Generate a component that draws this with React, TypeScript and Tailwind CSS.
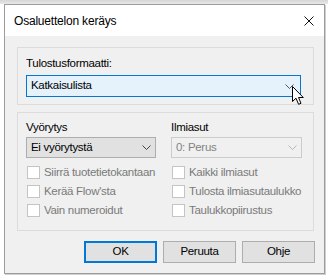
import React from "react";

const font = { fontFamily: '"Liberation Sans", Arial, sans-serif' };

function Chevron({ color = "#333" }: { color?: string }) {
  return (
    <svg width="9" height="5" viewBox="0 0 9 5" className="shrink-0">
      <path d="M0.5 0.5 L4.5 4.5 L8.5 0.5" fill="none" stroke={color} strokeWidth="1" />
    </svg>
  );
}

function Check({ label }: { label: string }) {
  return (
    <div className="flex items-center h-[19px]">
      <div className="w-[13px] h-[13px] border border-[#c4c4c4] bg-white ml-[1px]" />
      <span className="ml-[4px] text-[#7a7a7a]">{label}</span>
    </div>
  );
}

export default function App() {
  return (
    <div
      className="w-[328px] h-[279px] bg-white overflow-hidden text-[11.5px] tracking-[-0.3px] text-black leading-none"
      style={font}
    >
      <div className="h-[4px] bg-gradient-to-b from-[#d6d6d6] to-[#e8e8e8]" />
      <div className="ml-[4px] w-[321px] h-[270px] border border-[#9c9c9c] flex flex-col shadow-[1px_1px_0_#cfcfcf]">
        {/* title bar */}
        <div className="h-[31px] bg-white flex items-center justify-between pl-[9px] pr-[10px]">
          <span className="text-[12px] tracking-[-0.2px]">Osaluettelon keräys</span>
          <svg width="10" height="10" viewBox="0 0 10 10">
            <path d="M0.5 0.5 L9.5 9.5 M9.5 0.5 L0.5 9.5" stroke="#111" strokeWidth="1" />
          </svg>
        </div>

        <div className="flex-1 bg-[#f0f0f0] pt-[11px] pl-[12px]">
          {/* group 1 */}
          <div className="w-[297px] h-[58px] border border-[#dcdcdc] pl-[8px] pt-[10px]">
            <div className="h-[12px]">Tulostusformaatti:</div>
            <div className="relative mt-[5px] w-[275px] h-[22px] border border-[#0078d7] bg-[#e5f1fb] flex items-center pl-[4px] pr-[6px] justify-between">
              <span>Katkaisulista</span>
              <Chevron color="#555" />
              <svg className="absolute left-[265px] top-[10px]" width="13" height="20" viewBox="0 0 13 20">
                <path
                  d="M0.5 0.5 L0.5 15.5 L4 12.2 L6.6 18.3 L9 17.3 L6.5 11.5 L11.3 11.5 Z"
                  fill="#fff"
                  stroke="#000"
                  strokeWidth="1"
                  strokeLinejoin="miter"
                />
              </svg>
            </div>
          </div>

          {/* group 2 */}
          <div className="mt-[7px] w-[297px] h-[119px] border border-[#dcdcdc] pl-[8px] pt-[9px] grid grid-cols-[145px_131px]">
            <div className="flex flex-col">
              <div className="h-[12px]">Vyörytys</div>
              <div className="mt-[3px] w-[130px] h-[21px] border border-[#adadad] bg-[#e1e1e1] flex items-center justify-between pl-[4px] pr-[4px]">
                <span>Ei vyörytystä</span>
                <Chevron color="#444" />
              </div>
              <div className="mt-[5px]">
                <Check label="Siirrä tuotetietokantaan" />
                <Check label="Kerää Flow'sta" />
                <Check label="Vain numeroidut" />
              </div>
            </div>
            <div className="flex flex-col">
              <div className="h-[12px]">Ilmiasut</div>
              <div className="mt-[3px] w-[131px] h-[21px] border border-[#cccccc] bg-[#f0f0f0] flex items-center justify-between pl-[4px] pr-[4px]">
                <span className="text-[#838383]">0: Perus</span>
                <Chevron color="#b5b5b5" />
              </div>
              <div className="mt-[5px]">
                <Check label="Kaikki ilmiasut" />
                <Check label="Tulosta ilmiasutaulukko" />
                <Check label="Taulukkopiirustus" />
              </div>
            </div>
          </div>

          {/* buttons */}
          <div className="mt-[10px] flex gap-[6px] pl-[67px]">
            <button className="w-[73px] h-[22px] border-2 border-[#0078d7] bg-[#e1e1e1] leading-none">OK</button>
            <button className="w-[73px] h-[22px] border border-[#adadad] bg-[#e1e1e1] leading-none">Peruuta</button>
            <button className="w-[73px] h-[22px] border border-[#adadad] bg-[#e1e1e1] leading-none">Ohje</button>
          </div>
        </div>
      </div>
    </div>
  );
}
